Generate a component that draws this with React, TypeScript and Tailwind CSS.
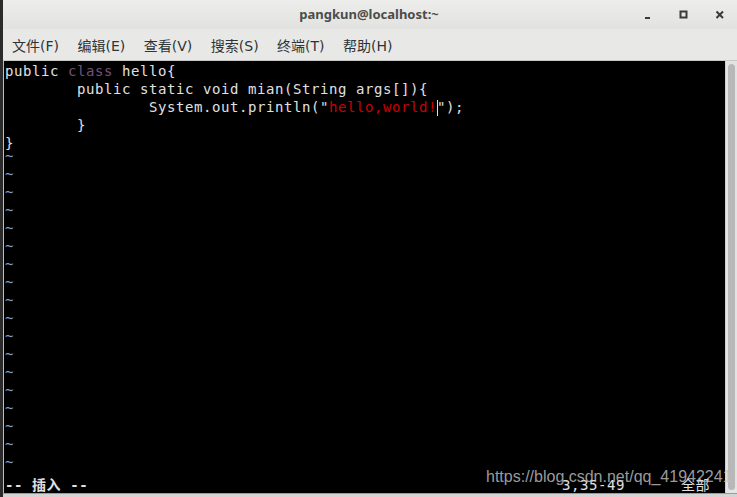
import React from 'react';

const mono = { fontFamily: '"DejaVu Sans Mono", "Noto Sans CJK SC", monospace' };

const tildeCount = 18;

export default function App() {
    return (
        <div className="w-[737px] h-[497px] flex bg-[#2d2d2d] overflow-hidden">
            {/* left shadow edge */}
            <div className="w-[3px] bg-[#2b2b2b]" />

            <div className="flex-1 flex flex-col min-w-0">
                {/* Title bar */}
                <div className="h-[29px] flex items-center bg-gradient-to-b from-[#ededec] to-[#e2e2e1]">
                    <div className="flex-1" />
                    <div
                        className="text-[13px] font-bold text-[#4a4d4a] pt-[1px] ml-[10px]"
                        style={{ fontFamily: '"Noto Sans", "DejaVu Sans", sans-serif' }}
                    >
                        pangkun@localhost:~
                    </div>
                    <div className="flex-1 flex justify-end items-center gap-[26px] pr-[12px]">
                        <svg width="10" height="10" viewBox="0 0 10 10">
                            <rect x="2" y="7" width="5" height="2" fill="#3a3a3a" />
                        </svg>
                        <svg width="10" height="10" viewBox="0 0 10 10">
                            <rect x="1.5" y="1.5" width="6" height="6" fill="none" stroke="#3a3a3a" strokeWidth="2" />
                        </svg>
                        <svg width="10" height="10" viewBox="0 0 10 10">
                            <path d="M1.5 1.5 L8 8 M8 1.5 L1.5 8" stroke="#3a3a3a" strokeWidth="2" />
                        </svg>
                    </div>
                </div>

                {/* Menu bar */}
                <div
                    className="h-[32px] flex items-center gap-[18.5px] pl-[9px] pt-[3px] bg-[#e8e8e7] border-b border-[#c8c8c6] text-[14px] text-[#2e3436]"
                    style={{ fontFamily: '"DejaVu Sans", "Noto Sans CJK SC", sans-serif' }}
                >
                    <span>文件(F)</span>
                    <span>编辑(E)</span>
                    <span>查看(V)</span>
                    <span>搜索(S)</span>
                    <span>终端(T)</span>
                    <span>帮助(H)</span>
                </div>

                {/* Terminal */}
                <div className="flex-1 flex min-h-0 relative">
                    <div className="w-[1px] bg-[#bdbdbd]" />
                    <div
                        className="flex-1 bg-black pl-[1px] pt-[1px] text-[14px] tracking-[0.57px] leading-[18px] text-[#e0e0e0] whitespace-pre"
                        style={mono}
                    >
                        <div>
                            public <span className="text-[#75507b]">class</span> hello{'{'}
                        </div>
                        <div>{'        public static void mian(String args[]){'}</div>
                        <div>
                            {'                System.out.println("'}
                            <span className="text-[#cc0000]">hello,world!</span>
                            <span className="relative">
                                <span className="absolute left-0 top-[1px] w-[1px] h-[16px] bg-[#e0e0e0]" />
                                {'");'}
                            </span>
                        </div>
                        <div>{'        }'}</div>
                        <div>{'}'}</div>
                        {Array.from({ length: tildeCount }).map((_, i) => (
                            <div key={i} className="text-[#729fcf]">
                                <span className="inline-block -translate-y-[5px]">~</span>
                            </div>
                        ))}
                        <div className="flex">
                            <span className="font-bold w-[557px]">-- 插入 --</span>
                            <span className="w-[119px]">3,35-49</span>
                            <span>全部</span>
                        </div>
                    </div>

                    {/* Scrollbar */}
                    <div className="w-[12px] bg-[#e4e4e4] border-l border-[#d0d0d0] flex justify-center py-[3px]">
                        <div className="w-[7px] h-full rounded-full bg-[#b8b8b8]" />
                    </div>

                    {/* watermark */}
                    <div
                        className="absolute left-[483px] bottom-[4px] text-[16px] text-[#c4c4c4]/80"
                        style={{ fontFamily: '"Liberation Sans", Arial, sans-serif' }}
                    >
                        https://blog.csdn.net/qq_41942241
                    </div>
                </div>

                {/* bottom edge */}
                <div className="h-[4px] bg-[#d4d4d4] border-t border-[#9a9a9a]" />
            </div>
        </div>
    );
}
